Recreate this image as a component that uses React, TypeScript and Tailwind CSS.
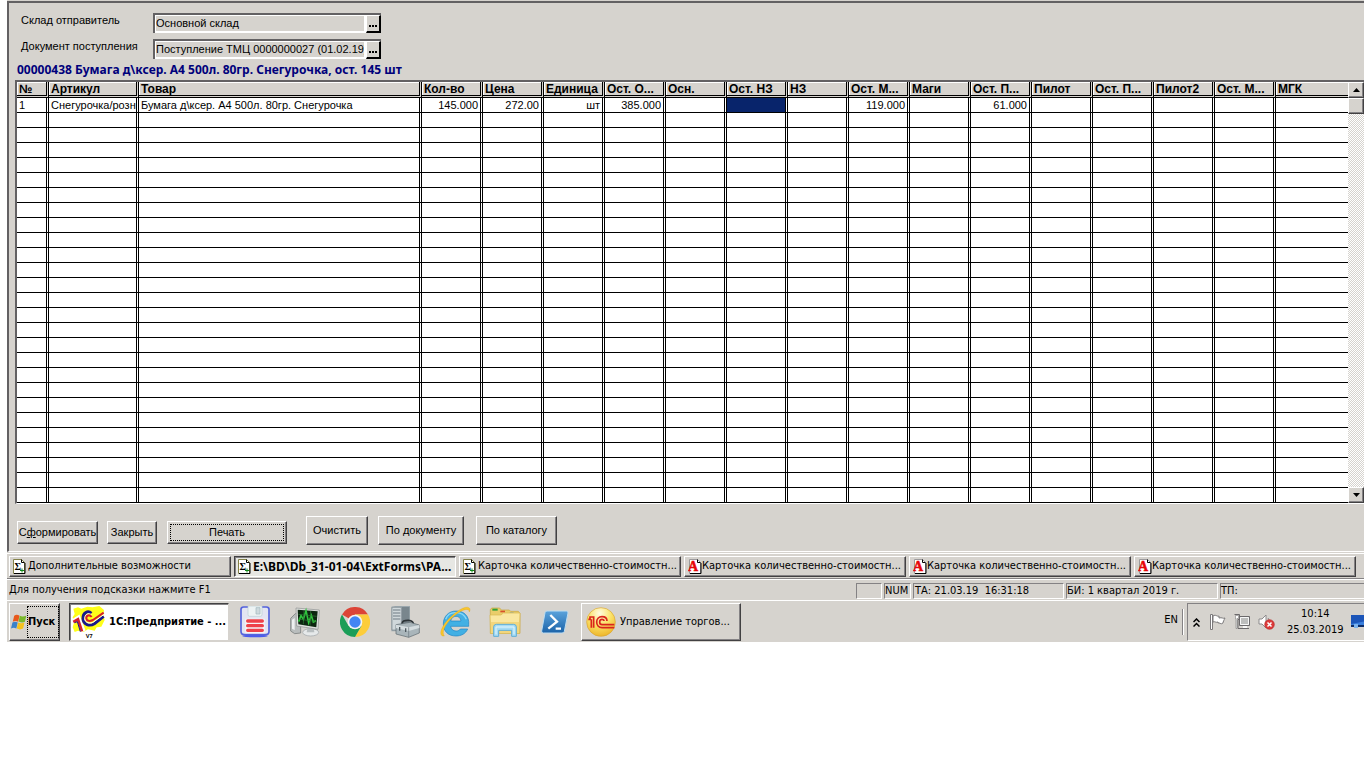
import React from 'react';

const FORM_FONT = "font-['Liberation_Sans',sans-serif] text-[11px]";
const BAR_FONT = "font-['DejaVu_Sans_Condensed','DejaVu_Sans',sans-serif] text-[11px]";
const RAISED = 'border border-t-white border-l-white border-r-[#424142] border-b-[#424142] shadow-[inset_-1px_-1px_0_#848284]';
const SUNKEN = 'border border-t-[#848284] border-l-[#848284] border-r-white border-b-white';

type Column = { title: string; width: string; value?: string; right?: boolean };

const columns: Column[] = [
  { title: '№', width: 'w-8', value: '1' },
  { title: 'Артикул', width: 'w-[90px]', value: 'Снегурочка/розница' },
  { title: 'Товар', width: 'w-[283px]', value: 'Бумага д\\ксер. А4 500л. 80гр. Снегурочка' },
  { title: 'Кол-во', width: 'w-[61px]', value: '145.000', right: true },
  { title: 'Цена', width: 'w-[61px]', value: '272.00', right: true },
  { title: 'Единица', width: 'w-[61px]', value: 'шт', right: true },
  { title: 'Ост. О...', width: 'w-[61px]', value: '385.000', right: true },
  { title: 'Осн.', width: 'w-[61px]' },
  { title: 'Ост. НЗ', width: 'w-[61px]' },
  { title: 'НЗ', width: 'w-[61px]' },
  { title: 'Ост. М...', width: 'w-[61px]', value: '119.000', right: true },
  { title: 'Маги', width: 'w-[61px]' },
  { title: 'Ост. П...', width: 'w-[61px]', value: '61.000', right: true },
  { title: 'Пилот', width: 'w-[61px]' },
  { title: 'Ост. П...', width: 'w-[61px]' },
  { title: 'Пилот2', width: 'w-[61px]' },
  { title: 'Ост. М...', width: 'w-[61px]' },
  { title: 'МГК', width: '' },
];

const SELECTED_COLUMN = 8;
const ROW_COUNT = 27;

function Picker({ id, label, value }: { id: string; label: string; value: string }) {
  return (
    <div className="flex items-start">
      <label htmlFor={id} className="w-[136px] pl-1 leading-[14px]">{label}</label>
      <div className="flex h-5 w-[228px] border-t-2 border-l-2 border-[#636163] bg-white">
        <input
          id={id}
          readOnly
          defaultValue={value}
          className="mt-px mr-0.5 mb-0.5 ml-px h-[15px] min-w-0 flex-1 bg-[#d6d3ce] outline-none"
        />
        <button
          type="button"
          aria-label={`Выбрать: ${label}`}
          className="flex h-[18px] w-[15px] items-end justify-center gap-px border-t border-l border-r-2 border-b-2 border-t-white border-l-white border-r-black border-b-black bg-[#d6d3ce] pb-1"
        >
          <span className="size-0.5 bg-black" />
          <span className="size-0.5 bg-black" />
          <span className="size-0.5 bg-black" />
        </button>
      </div>
    </div>
  );
}

function FormButton({ className, children }: { className: string; children: React.ReactNode }) {
  return (
    <button type="button" className={`${RAISED} flex items-center justify-center whitespace-nowrap bg-[#d6d3ce] ${className}`}>
      {children}
    </button>
  );
}

function Grid() {
  return (
    <div className="flex border-t-2 border-l-2 border-b border-t-[#636163] border-l-[#636163] border-b-white bg-white">
      <div className="min-w-0 flex-1">
        <table className="w-full table-fixed border-separate border-spacing-0">
          <thead>
            <tr className="h-4">
              {columns.map((c, i) => (
                <th
                  key={i}
                  className={`${c.width} h-4 overflow-hidden whitespace-nowrap border-b-[3px] border-double border-black bg-[#d6d3ce] p-0 pl-0.5 text-left align-bottom text-[12px] leading-[12px] font-bold shadow-[inset_1px_1px_0_#fff] ${i < columns.length - 1 ? 'border-r-[3px]' : ''}`}
                >
                  {c.title}
                </th>
              ))}
            </tr>
          </thead>
          <tbody>
            {Array.from({ length: ROW_COUNT }, (_, r) => (
              <tr key={r} className="h-[15px]">
                {columns.map((c, i) => (
                  <td
                    key={i}
                    className={`h-[15px] overflow-hidden text-clip whitespace-nowrap border-b border-black p-0 px-0.5 leading-[14px] [border-right-style:double] ${c.right ? 'text-right' : ''} ${i < columns.length - 1 ? 'border-r-[3px]' : ''} ${r === 0 && i === SELECTED_COLUMN ? 'bg-[#08246b] bg-clip-padding' : ''}`}
                  >
                    {r === 0 ? c.value : null}
                  </td>
                ))}
              </tr>
            ))}
          </tbody>
        </table>
      </div>
      <div className="flex w-4 shrink-0 flex-col bg-[repeating-conic-gradient(#d6d3ce_0_25%,#fff_0_50%)] bg-size-[2px_2px]">
        <button type="button" aria-label="Прокрутить вверх" className={`${RAISED} flex h-4 items-center justify-center bg-[#d6d3ce]`}>
          <svg width="7" height="4" viewBox="0 0 7 4"><path d="M3.5 0L7 4H0z" /></svg>
        </button>
        <div className={`${RAISED} h-4 bg-[#d6d3ce]`} />
        <button type="button" aria-label="Прокрутить вниз" className={`${RAISED} mt-auto flex h-4 items-center justify-center bg-[#d6d3ce]`}>
          <svg width="7" height="4" viewBox="0 0 7 4"><path d="M0 0H7L3.5 4z" /></svg>
        </button>
      </div>
    </div>
  );
}

function ReportIcon() {
  return (
    <svg width="13" height="15" viewBox="0 0 13 15" className="shrink-0">
      <path d="M.5.5h8l3 3v11H.5z" fill="#fff" stroke="#84824a" />
      <path d="M8.5.5v3h3M12 4v10.500M1 14.500h11" fill="none" stroke="#000" />
      <text x="1.500" y="11" fontSize="10" fontWeight="bold" fontFamily="Liberation Serif, serif">Σ</text>
      <path d="M7 11.500h4M9 9.500v4" stroke="#108a18" />
    </svg>
  );
}

function CardIcon() {
  return (
    <svg width="14" height="15" viewBox="0 0 14 15" className="shrink-0">
      <path d="M1.500.5h8l3 3v11h-11z" fill="#fff" stroke="#9c9a9c" />
      <path d="M9.500.5v3h3M13 4v10.500M2 14.500h11" fill="none" stroke="#000" />
      <text x="0" y="12" fontSize="14" fontWeight="bold" fill="#e70808" stroke="#e70808" strokeWidth=".5" fontFamily="Liberation Serif, serif">A</text>
    </svg>
  );
}

const windowTabs = [
  { title: 'Дополнительные возможности', icon: 'report' },
  { title: 'E:\\BD\\Db_31-01-04\\ExtForms\\PA...', icon: 'report', active: true },
  { title: 'Карточка количественно-стоимостн...', icon: 'report' },
  { title: 'Карточка количественно-стоимостн...', icon: 'card' },
  { title: 'Карточка количественно-стоимостн...', icon: 'card' },
  { title: 'Карточка количественно-стоимостн...', icon: 'card' },
];

function WindowTabs() {
  return (
    <nav className="flex gap-[3px] border-t border-b border-t-white border-b-[#848284] pt-0.5 pr-2 pb-px pl-0.5">
      {windowTabs.map((t, i) => (
        <button
          key={i}
          type="button"
          className={`flex h-[21px] min-w-0 flex-1 basis-0 items-center overflow-hidden whitespace-nowrap pl-[3px] ${t.icon === 'report' ? 'gap-0.5' : ''} ${
            t.active
              ? "border border-t-[#424142] border-l-[#424142] border-r-white border-b-white bg-[#e7e7e3] font-['Noto_Sans',sans-serif] text-[12px] font-bold shadow-[inset_1px_1px_0_#848284]"
              : RAISED
          }`}
        >
          {t.icon === 'report' ? <ReportIcon /> : <CardIcon />}
          {t.title}
        </button>
      ))}
    </nav>
  );
}

function StatusBar() {
  return (
    <div className="flex gap-0.5 border-t border-white pt-[3px] pb-px leading-[14px] whitespace-pre">
      <span className="flex-1 pl-0.5">Для получения подсказки нажмите F1</span>
      <span className={`${SUNKEN} h-4 w-[26px]`} />
      <span className={`${SUNKEN} h-4 w-[27px]`}>NUM</span>
      <span className={`${SUNKEN} h-4 w-[151px] pl-px`}>ТА: 21.03.19  16:31:18</span>
      <span className={`${SUNKEN} h-4 w-[152px]`}>БИ: 1 квартал 2019 г.</span>
      <span className={`${SUNKEN} h-4 w-36 border-r-0`}>ТП:</span>
    </div>
  );
}

function WindowsFlag() {
  return (
    <svg width="16" height="16" viewBox="2 0 43 45" className="shrink-0">
      <path d="M10 5c5-4 10-3 15 0l-4 17c-5-3-10-3-15 0z" fill="#e8591c" />
      <path d="M26 5c5 3 10 3 18 0l-4 17c-6 3-11 2-18-1z" fill="#7ab82c" />
      <path d="M5 24c5-3 10-3 15 0l-4 17c-5-3-10-3-15 0z" fill="#3b82c8" />
      <path d="M21 24c6 3 11 3 18 0l-4 17c-6 3-11 3-18 0z" fill="#f6c21c" />
    </svg>
  );
}

function EnterpriseV7Icon() {
  return (
    <svg width="34" height="32" viewBox="0 0 102 96" className="shrink-0">
      <path d="M4 8l14-4 10 4 18-6 16 2 20-4 14 12-2 16 4 14-10 20-14 2-6 10-20-4-14 8-16-4-10 4-6-14 4-14-4-16 6-10z" fill="#ffff18" />
      <path d="M3 46l16-10 15 40" fill="none" stroke="#fff" strokeWidth="14" />
      <path d="M4 48l14-8 12 36" fill="none" stroke="#d6202c" strokeWidth="8" />
      <path d="M8 50l8-3 9 30" fill="none" stroke="#18188c" strokeWidth="3" />
      <path d="M58 22C48 12 32 20 33 38s20 24 34 15l28-22" fill="none" stroke="#18188c" strokeWidth="9" />
      <path d="M59 27C50 18 38 26 38 38s16 18 28 9l29-21" fill="none" stroke="#fff" strokeWidth="3" />
      <path d="M59 33c-7-9-17-4-16 4s10 10 20 5l32-22" fill="none" stroke="#d6202c" strokeWidth="6" />
      <text x="41" y="95" fontSize="17" fontWeight="bold" fontFamily="Liberation Sans, sans-serif">V7</text>
    </svg>
  );
}

function FloppyIcon() {
  return (
    <svg width="30" height="32" viewBox="0 0 90 96">
      <ellipse cx="45" cy="90" rx="38" ry="4" fill="#4a5aef" />
      <path d="M3 10q0-7 8-7h68q8 0 8 7v66q0 10-10 10H13Q3 86 3 76z" fill="#e3e5f2" stroke="#5463dd" strokeWidth="5" />
      <path d="M24 0h42v26q0 5-5 5H29q-5 0-5-5z" fill="#edf3f4" stroke="#b9cdd3" strokeWidth="2" />
      <path d="M48 5h12v19H48z" fill="#cfdade" stroke="#9fb5bd" strokeWidth="2" />
      <path d="M16 38h58v44H16z" fill="#f5f5f7" />
      <path d="M23 45h44M23 59h44M23 73h44" stroke="#ee4149" strokeWidth="10" strokeLinecap="round" />
    </svg>
  );
}

function MonitorIcon() {
  return (
    <svg width="30" height="30" viewBox="0 0 90 90">
      <path d="M2 34l14-14 16-2v60l-18 2-12-8z" fill="#b9bdbd" stroke="#6b7070" strokeWidth="2" />
      <path d="M6 38l8-5v36l-8-4z" fill="#eef0f0" />
      <ellipse cx="62" cy="76" rx="24" ry="11" fill="#e6e9ea" stroke="#9da3a6" strokeWidth="2" />
      <path d="M54 56h16l3 20H50z" fill="#b8bec0" />
      <path d="M18 3l70 6-4 58-64-10z" fill="#dfe1df" stroke="#8c908f" strokeWidth="2" />
      <path d="M23 8l60 5-4 48-54-9z" fill="#0c2610" />
      <path d="M26 44l7-18 7 11 8-26 8 36 8-22 6 20 8-4" fill="none" stroke="#2ec53c" strokeWidth="5" />
      <path d="M25 22l55 6M25 36l54 8M42 10l-2 42M62 12l-2 44" stroke="#2d7a35" strokeWidth="2" />
    </svg>
  );
}

function ChromeIcon() {
  return (
    <svg width="30" height="30" viewBox="0 0 90 90">
      <path d="M45 45L6 22.500A45 45 0 0 1 84 22.500H45z" fill="#dc4437" />
      <path d="M45 22.500H84A45 45 0 0 1 45 90L64.500 56.200z" fill="#fdcd3b" />
      <path d="M25.500 56.200L6 22.500A45 45 0 0 0 45 90L64.500 56.200z" fill="#1b9e58" />
      <circle cx="45" cy="45" r="22" fill="#f4f4f4" />
      <circle cx="45" cy="45" r="17" fill="#4285f4" />
    </svg>
  );
}

function ServerIcon() {
  return (
    <svg width="30" height="32" viewBox="0 0 90 96">
      <path d="M4 2l12-2h44v66l-12 10H4z" fill="#9ba7ad" />
      <path d="M6 4h28v68H6z" fill="#d0d8db" stroke="#7d898f" strokeWidth="2" />
      <path d="M9 12h22M9 21h22M9 30h22M9 39h22" stroke="#6e7b83" strokeWidth="3" />
      <path d="M36 3h22v58l-22 9z" fill="#79868d" />
      <path d="M36 54q0-12 20-11 14 1 14 12" fill="none" stroke="#2c3337" strokeWidth="5" />
      <path d="M18 56l42-7 28 8v24L56 94 18 84z" fill="#a9b5ba" stroke="#59656b" strokeWidth="2" />
      <path d="M18 56l38 8 32-7v9l-32 9-38-9z" fill="#d5dde0" />
      <path d="M56 64v30" stroke="#6b777d" strokeWidth="2" />
      <path d="M29 63v11M47 67v11" stroke="#4c575d" strokeWidth="4" />
    </svg>
  );
}

function ExplorerEIcon() {
  return (
    <svg width="32" height="32" viewBox="0 0 96 96">
      <path d="M89 55c2-24-13-40-37-40S13 32 13 54s15 36 38 36c16 0 29-7 35-21H64c-3 5-8 6-13 6-9 0-15-6-16-14h54z" fill="#42b0e4" stroke="#1c84c4" strokeWidth="2" />
      <path d="M35 45c2-9 8-14 16-14s14 5 15 14z" fill="#d6d3ce" stroke="#1c84c4" strokeWidth="2" />
      <path d="M20 40c5-14 18-21 32-20 15 0 25 8 30 20" fill="none" stroke="#8ad8f8" strokeWidth="4" />
      <path d="M16 90C-2 92 4 66 26 42S80-4 91 6c3 3 2 8 0 12 0-6-4-9-12-7C62 14 40 32 26 50S10 82 16 90z" fill="#f9c62c" stroke="#dfa012" />
    </svg>
  );
}

function FolderIcon() {
  return (
    <svg width="32" height="31" viewBox="0 0 96 93">
      <path d="M4 8l4-5h24l5 6h24l4 4h23l5 6v60H4z" fill="#e9cd6b" stroke="#c9a53b" strokeWidth="2" />
      <path d="M10 5h16v6H10z" fill="#31a03a" />
      <path d="M34 11h14v5H34z" fill="#d9502c" />
      <path d="M62 17h12v6H62z" fill="#3b8ed0" />
      <path d="M3 24h33l7-6h50l-2 61H5z" fill="#fae7a0" stroke="#d9b852" strokeWidth="2" />
      <path d="M6 45h85l-1 33H6z" fill="#f3d67d" />
      <path d="M14 88V60q0-8 8-8h52q8 0 8 8v28H68V70H29v18z" fill="#a7dcf4" stroke="#5faed6" strokeWidth="3" />
      <path d="M21 82V60h54v22" fill="none" stroke="#e4f6fd" strokeWidth="3" />
    </svg>
  );
}

function PowerShellIcon() {
  return (
    <svg width="28" height="24" viewBox="0 0 84 72">
      <defs>
        <linearGradient id="ps" x1="0" y1="0" x2="0" y2="1">
          <stop offset="0" stopColor="#5ba3dc" />
          <stop offset="1" stopColor="#1c63a8" />
        </linearGradient>
      </defs>
      <path d="M18 3h58q6 0 5 6L70 64q-1 5-7 5H7q-6 0-5-6L12 8q1-5 6-5z" fill="url(#ps)" stroke="#bcdcf1" strokeWidth="3" />
      <path d="M28 15l20 20-26 21M44 56h16" fill="none" stroke="#fff" strokeWidth="7" />
    </svg>
  );
}

function OneCIcon() {
  return (
    <svg width="30" height="30" viewBox="0 0 90 90" className="shrink-0">
      <defs>
        <radialGradient id="onec" cx=".45" cy=".2" r=".8">
          <stop offset="0" stopColor="#fffbe0" />
          <stop offset=".5" stopColor="#fbe36a" />
          <stop offset="1" stopColor="#eeb62a" />
        </radialGradient>
      </defs>
      <circle cx="45" cy="45" r="43" fill="url(#onec)" stroke="#d9a637" strokeWidth="2" />
      <path d="M7 37h5V30h11V62M16 37v25" fill="none" stroke="#da251c" strokeWidth="5" />
      <path d="M63 42c0-8-6-13-15-13-10 0-16 7-16 16s6 17 16 17h37" fill="none" stroke="#da251c" strokeWidth="5" />
      <path d="M54 42c0-3-3-5-6-5-5 0-7 4-7 8s2 8 7 8h37" fill="none" stroke="#da251c" strokeWidth="5" />
    </svg>
  );
}

const quickLaunch = [
  { name: 'Сохранение', icon: <FloppyIcon /> },
  { name: 'Диспетчер', icon: <MonitorIcon /> },
  { name: 'Chrome', icon: <ChromeIcon /> },
  { name: 'Сервер', icon: <ServerIcon /> },
  { name: 'Internet Explorer', icon: <ExplorerEIcon /> },
  { name: 'Проводник', icon: <FolderIcon /> },
  { name: 'PowerShell', icon: <PowerShellIcon /> },
];

function Tray() {
  return (
    <div className="ml-auto flex items-stretch">
      <span className="pr-1 leading-[34px]">EN</span>
      <span className="my-1.5 mr-[3px] w-0.5 border-r border-l border-l-[#848284] border-r-white" />
      <div className="flex w-[177px] items-center overflow-hidden border-t border-b border-l border-t-[#848284] border-l-[#848284] border-b-white">
        <svg width="7" height="9" viewBox="0 0 7 9" className="ml-[5px] shrink-0">
          <path d="M.5 4l3-3 3 3M.5 8.500l3-3 3 3" fill="none" stroke="#000" strokeWidth="1.500" />
        </svg>
        <svg width="16" height="16" viewBox="0 0 16 16" className="ml-2.5 shrink-0">
          <path d="M3 2c3-2 4 1 6 0v2c3-1 4 1 6 0-1 2-2 4-2 5-2 2-4-1-5 0V8C6 9 5 7 3 8z" fill="#fff" stroke="#7b797b" />
          <path d="M.5.5h2v15h-2z" fill="#fff" stroke="#7b797b" />
        </svg>
        <svg width="16" height="16" viewBox="0 0 16 16" className="ml-2 shrink-0">
          <path d="M5.500 2.500h10v9h-10z" fill="#bdbebd" stroke="#6b696b" />
          <path d="M6.500 3.500h8v7h-8z" fill="none" stroke="#f7f7f7" />
          <path d="M7 14.500h8" stroke="#6b696b" />
          <path d="M9 13h4" stroke="#f7f7f7" strokeWidth="2" />
          <path d="M.5.5h5v5h-1.500v9h3" fill="none" stroke="#6b696b" />
          <path d="M1.500 1.500h3v3h-1.500v10h-1v-10h-.5z" fill="#fff" stroke="#6b696b" strokeWidth=".5" />
        </svg>
        <svg width="17" height="16" viewBox="0 0 17 16" className="ml-2 shrink-0">
          <path d="M1 5h3l4-4v13l-4-4H1z" fill="#fff" stroke="#8c8a8c" />
          <path d="M10 4q2 2 1 5" fill="none" stroke="#8c8a8c" />
          <circle cx="11.500" cy="10.500" r="4.800" fill="#dc3c3c" stroke="#b52020" strokeWidth=".6" />
          <path d="M9.500 8.500l4 4M13.500 8.500l-4 4" stroke="#fff" strokeWidth="1.500" />
        </svg>
        <div className="ml-3 shrink-0 text-center leading-4">
          <div>10:14</div>
          <div>25.03.2019</div>
        </div>
        <svg width="20" height="14" viewBox="0 0 20 14" className="ml-[7px] shrink-0">
          <path d="M0 0h20v12H0z" fill="#3a7fdc" />
          <path d="M0 0h20v5L0 9z" fill="#1c55b8" />
          <path d="M0 10h20v2H0z" fill="#0c2c68" />
          <path d="M3 9h4v4H3z" fill="#7ab2ee" />
        </svg>
      </div>
    </div>
  );
}

function TaskBar() {
  return (
    <footer className="flex h-[42px] border-t border-white pt-0.5 pb-px pl-0.5">
      <button type="button" className={`${RAISED} flex w-[51px] items-center pl-px font-bold`}>
        <WindowsFlag />
        <span className="flex h-8 flex-1 items-center border border-dotted border-black">Пуск</span>
      </button>
      <button
        type="button"
        className="ml-[9px] flex w-40 items-center gap-[3px] border border-t-[#424142] border-l-[#424142] border-r-[#d6d3ce] border-b-[#d6d3ce] bg-white pl-0.5 font-bold whitespace-nowrap shadow-[inset_1px_1px_0_#848284]"
      >
        <EnterpriseV7Icon />
        1С:Предприятие - ...
      </button>
      <div className="ml-px flex">
        {quickLaunch.map((q) => (
          <button key={q.name} type="button" aria-label={q.name} className="flex w-[50px] items-center justify-center">
            {q.icon}
          </button>
        ))}
      </div>
      <button type="button" className={`${RAISED} ml-px flex w-[160px] items-center gap-1 pl-1 whitespace-nowrap`}>
        <OneCIcon />
        Управление торгов...
      </button>
      <Tray />
    </footer>
  );
}

export default function App() {
  return (
    <div className="bg-white pl-[7px] text-black">
      <div className={`overflow-hidden bg-[#d6d3ce] pt-px ${BAR_FONT}`}>
        <main className={`border-t-2 border-b border-l-2 border-t-[#636163] border-b-white border-l-[#636163] pt-2.5 pb-1.5 pl-1.5 ${FORM_FONT}`}>
          <div className="flex flex-col gap-1.5 pl-0.5">
            <Picker id="warehouse" label="Склад отправитель" value="Основной склад" />
            <Picker id="receipt" label="Документ поступления" value="Поступление ТМЦ 0000000027 (01.02.19)" />
          </div>
          <h1 className="mt-1 mb-[3px] pl-0.5 font-['Noto_Sans',sans-serif] text-[12px] leading-[14px] font-bold text-[#00007b]">
            00000438 Бумага д\ксер. А4 500л. 80гр. Снегурочка, ост. 145 шт
          </h1>
          <Grid />
          <div className="mt-3 flex items-start pl-0.5">
            <div className="flex pt-[5px]">
              <FormButton className="h-[23px] w-[81px]"><span>С<u>ф</u>ормировать</span></FormButton>
              <FormButton className="ml-[9px] h-[23px] w-[50px]">Закрыть</FormButton>
              <FormButton className="ml-2.5 h-[23px] w-[120px] px-0.5">
                <span className="h-[17px] w-full border border-dotted border-black leading-[15px]">Печать</span>
              </FormButton>
            </div>
            <FormButton className="ml-[19px] h-[29px] w-[62px]">Очистить</FormButton>
            <FormButton className="ml-2.5 h-[29px] w-[86px]">По документу</FormButton>
            <FormButton className="ml-3 h-[29px] w-[81px]">По каталогу</FormButton>
          </div>
        </main>
        <div className="pt-px">
          <WindowTabs />
        </div>
        <StatusBar />
        <TaskBar />
      </div>
    </div>
  );
}
